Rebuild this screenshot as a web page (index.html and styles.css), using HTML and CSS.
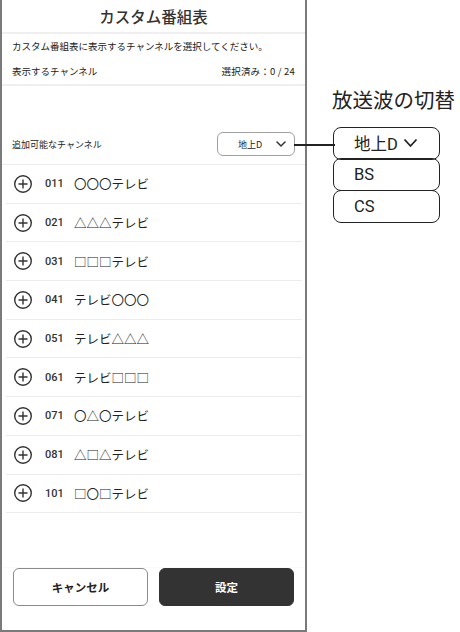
FILE: index.html
```html
<!DOCTYPE html>
<html lang="ja">
<head>
<meta charset="utf-8">
<link rel="stylesheet" href="styles.css">
</head>
<body>
<div class="page">
  <div class="phone">
    <div class="title">カスタム番組表</div>
    <div class="desc">カスタム番組表に表示するチャンネルを選択してください。</div>
    <div class="selected">
      <span>表示するチャンネル</span>
      <span>選択済み：0 / 24</span>
    </div>
    <div class="spacer"></div>
    <div class="avail">
      <span>追加可能なチャンネル</span>
      <div class="dropdown">
        <span>地上D</span>
        <svg class="chev" width="10" height="6" viewBox="0 0 10 6"><path d="M1 1 L5 5 L9 1" fill="none" stroke="#333" stroke-width="1.5" stroke-linecap="round" stroke-linejoin="round"/></svg>
      </div>
    </div>
    <ul class="list">
      <li><svg class="plus" viewBox="0 0 20 20"><circle cx="10" cy="10" r="8.3" fill="none" stroke="#333" stroke-width="1.4"/><path d="M10 5.5 V14.5 M5.5 10 H14.5" stroke="#333" stroke-width="1.4"/></svg><span class="num">011</span><span class="name">〇〇〇テレビ</span></li>
      <li><svg class="plus" viewBox="0 0 20 20"><circle cx="10" cy="10" r="8.3" fill="none" stroke="#333" stroke-width="1.4"/><path d="M10 5.5 V14.5 M5.5 10 H14.5" stroke="#333" stroke-width="1.4"/></svg><span class="num">021</span><span class="name">△△△テレビ</span></li>
      <li><svg class="plus" viewBox="0 0 20 20"><circle cx="10" cy="10" r="8.3" fill="none" stroke="#333" stroke-width="1.4"/><path d="M10 5.5 V14.5 M5.5 10 H14.5" stroke="#333" stroke-width="1.4"/></svg><span class="num">031</span><span class="name">□□□テレビ</span></li>
      <li><svg class="plus" viewBox="0 0 20 20"><circle cx="10" cy="10" r="8.3" fill="none" stroke="#333" stroke-width="1.4"/><path d="M10 5.5 V14.5 M5.5 10 H14.5" stroke="#333" stroke-width="1.4"/></svg><span class="num">041</span><span class="name">テレビ〇〇〇</span></li>
      <li><svg class="plus" viewBox="0 0 20 20"><circle cx="10" cy="10" r="8.3" fill="none" stroke="#333" stroke-width="1.4"/><path d="M10 5.5 V14.5 M5.5 10 H14.5" stroke="#333" stroke-width="1.4"/></svg><span class="num">051</span><span class="name">テレビ△△△</span></li>
      <li><svg class="plus" viewBox="0 0 20 20"><circle cx="10" cy="10" r="8.3" fill="none" stroke="#333" stroke-width="1.4"/><path d="M10 5.5 V14.5 M5.5 10 H14.5" stroke="#333" stroke-width="1.4"/></svg><span class="num">061</span><span class="name">テレビ□□□</span></li>
      <li><svg class="plus" viewBox="0 0 20 20"><circle cx="10" cy="10" r="8.3" fill="none" stroke="#333" stroke-width="1.4"/><path d="M10 5.5 V14.5 M5.5 10 H14.5" stroke="#333" stroke-width="1.4"/></svg><span class="num">071</span><span class="name">〇△〇テレビ</span></li>
      <li><svg class="plus" viewBox="0 0 20 20"><circle cx="10" cy="10" r="8.3" fill="none" stroke="#333" stroke-width="1.4"/><path d="M10 5.5 V14.5 M5.5 10 H14.5" stroke="#333" stroke-width="1.4"/></svg><span class="num">081</span><span class="name">△□△テレビ</span></li>
      <li><svg class="plus" viewBox="0 0 20 20"><circle cx="10" cy="10" r="8.3" fill="none" stroke="#333" stroke-width="1.4"/><path d="M10 5.5 V14.5 M5.5 10 H14.5" stroke="#333" stroke-width="1.4"/></svg><span class="num">101</span><span class="name">□〇□テレビ</span></li>
    </ul>
    <div class="footer">
      <button class="btn cancel">キャンセル</button>
      <button class="btn ok">設定</button>
    </div>
  </div>
  <div class="note">
    <div class="note-title">放送波の切替</div>
    <div class="opt">地上D
      <svg width="15" height="10" viewBox="0 0 15 10"><path d="M1.5 1.5 L7.5 8 L13.5 1.5" fill="none" stroke="#222" stroke-width="1.8" stroke-linejoin="round"/></svg>
    </div>
    <div class="opt">BS</div>
    <div class="opt">CS</div>
  </div>
  <div class="connector"></div>
</div>
</body>
</html>
```

FILE: styles.css
```css
* { box-sizing: border-box; }
html, body { margin: 0; padding: 0; background: #fff; }
body {
  width: 460px;
  height: 632px;
  font-family: "Noto Sans CJK JP", "Noto Sans", sans-serif;
  color: #222;
  overflow: hidden;
}
.page {
  position: relative;
  display: flex;
  width: 460px;
  height: 632px;
}
.phone {
  width: 307px;
  height: 632px;
  border-left: 2px solid #7a7a7a;
  border-right: 2px solid #7a7a7a;
  border-bottom: 2px solid #7a7a7a;
  display: flex;
  flex-direction: column;
}
.title {
  height: 34px;
  line-height: 33px;
  text-align: center;
  font-size: 15.5px;
  font-weight: 500;
  color: #333;
  border-bottom: 2px solid #efefef;
}
.desc {
  font-size: 9.5px;
  padding: 4px 0 0 10px;
  height: 24px;
  line-height: 17px;
  color: #222;
}
.selected {
  display: flex;
  justify-content: space-between;
  font-size: 9.5px;
  padding: 0 10px 0 10px;
  height: 28px;
  line-height: 26px;
  border-bottom: 2px solid #efefef;
}
.selected span:last-child { letter-spacing: 0.2px; }
.spacer { height: 39px; }
.avail {
  display: flex;
  align-items: center;
  justify-content: space-between;
  height: 40px;
  padding: 0 10px 0 10px;
  font-size: 9px;
  border-bottom: 1px solid #ececec;
}
.dropdown {
  width: 78px;
  height: 24px;
  border: 1px solid #a0a0a0;
  border-radius: 6px;
  display: flex;
  align-items: center;
  justify-content: space-between;
  padding: 0 8px 0 20px;
  font-size: 9px;
  margin-top: -1px;
}
.chev { display: block; }
.list {
  list-style: none;
  margin: 0;
  padding: 0 3px 0 4px;
}
.list li {
  height: 38.7px;
  display: flex;
  align-items: center;
  border-bottom: 1px solid #ececec;
  padding-left: 7px;
}
.plus { width: 20px; height: 20px; flex: none; }
.num {
  font-family: Roboto, "Noto Sans", sans-serif;
  font-weight: 500;
  font-size: 11px;
  margin-left: 12px;
  width: 29px;
  color: #333;
}
.name { font-size: 12.5px; color: #222; }
.footer {
  margin-top: auto;
  display: flex;
  gap: 11px;
  padding: 0 11px 24px 11px;
  border-top: 1px solid #fafafa;
}
.btn {
  flex: 1;
  height: 38px;
  border-radius: 6px;
  font-family: "Noto Sans CJK JP", sans-serif;
  font-weight: 700;
  font-size: 11.5px;
}
.cancel { background: #fff; border: 1px solid #8a8a8a; color: #222; }
.ok { background: #333; border: 1px solid #333; color: #fff; }
.note {
  flex: 1;
  padding-left: 26px;
  padding-top: 85px;
}
.note-title {
  font-size: 20.5px;
  line-height: 29px;
  color: #222;
  margin-bottom: 14px;
  margin-left: -1px;
}
.opt {
  width: 107px;
  height: 33px;
  border: 1.5px solid #222;
  border-radius: 8px;
  margin-top: -1.5px;
  font-size: 16.5px;
  padding-left: 20px;
  display: flex;
  align-items: center;
  gap: 5px;
  font-family: Roboto, "Noto Sans CJK JP", sans-serif;
}
.opt:first-of-type { height: 34px; margin-top: 0; }
.connector {
  position: absolute;
  left: 294px;
  top: 144px;
  width: 41px;
  height: 1.5px;
  background: #222;
}
```
